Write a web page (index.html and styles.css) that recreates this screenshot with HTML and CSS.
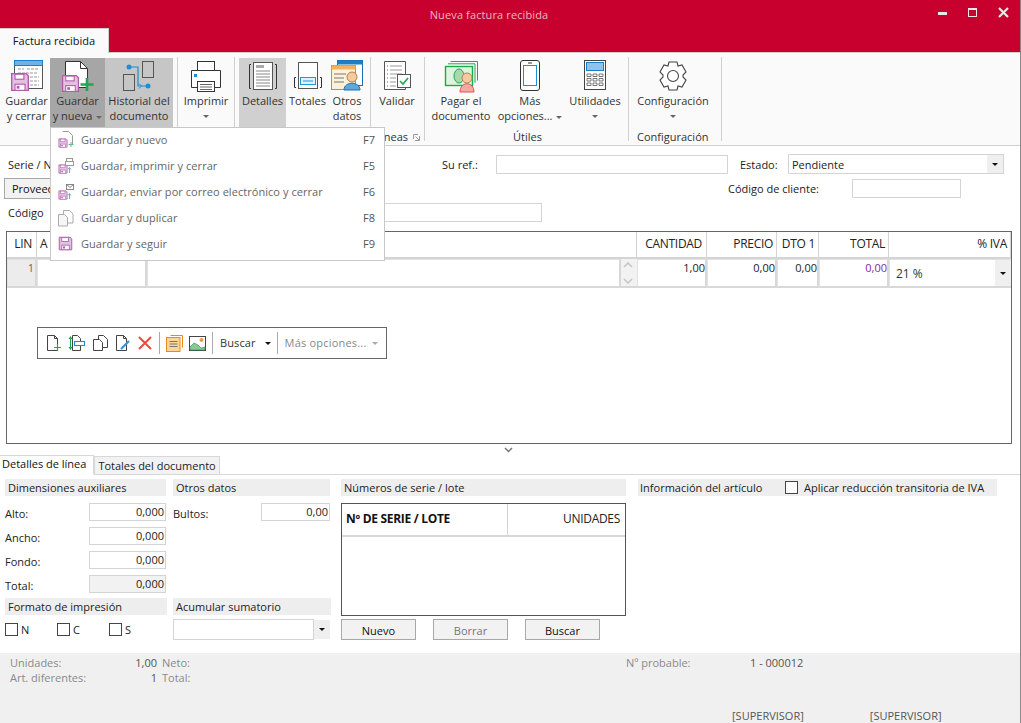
FILE: index.html
```html
<!DOCTYPE html>
<html lang="es">
<head>
<meta charset="utf-8">
<title>Nueva factura recibida</title>
<link rel="stylesheet" href="styles.css">
</head>
<body>
<svg class="defs" width="0" height="0">
  <defs>
    <symbol id="floppy" viewBox="0 0 18 18">
      <path d="M1.500 1.500h13l2 2v13h-15z" fill="#e3bfe0" stroke="#b05cab" stroke-width="1.200"/>
      <rect x="4.500" y="2" width="8" height="4.500" fill="#fff" stroke="#b05cab"/>
      <rect x="4.500" y="11" width="9" height="5.500" fill="#fff" stroke="#b05cab"/>
      <rect x="6" y="12.500" width="2.500" height="2.500" fill="#b05cab"/>
    </symbol>
  </defs>
</svg>
<div class="window">
  <header class="titlebar">
    <div class="title">Nueva factura recibida</div>
    <div class="winbtns">
      <span class="wb-min"></span>
      <span class="wb-max"></span>
      <svg class="wb-close" width="11" height="11" viewBox="0 0 11 11"><path d="M1 1l9 9M10 1l-9 9" stroke="#e8e8e8" stroke-width="2.200"/></svg>
    </div>
  </header>
  <div class="tabstrip"><div class="ribbontab">Factura recibida</div></div>

  <nav class="ribbon">
    <div class="rbtn w-gc">
      <svg width="34" height="36" viewBox="0 0 34 36"><rect x="4.500" y="1.500" width="28" height="28" fill="#fff" stroke="#555"/><rect x="4.500" y="1.500" width="28" height="5" fill="#6db3e8" stroke="#1c7fc7"/><path d="M8 10h6M17 10h12M8 14h20M20 18h9M20 22h9M20 26h9" stroke="#999" stroke-dasharray="3 1"/><use href="#floppy" x="0" y="13" width="20" height="20"/></svg>
      <span>Guardar<br>y cerrar</span>
    </div>
    <div class="rbtn w-gn is-dark">
      <svg width="34" height="36" viewBox="0 0 34 36"><path d="M4.500 2.500h15l7 7v19h-22z" fill="#fff" stroke="#333"/><path d="M19.500 2.500v7h7" fill="none" stroke="#333"/><use href="#floppy" x="0" y="15" width="19" height="19"/><path d="M26 19v13M19.500 25.500h13" stroke="#1ea84f" stroke-width="2.600"/></svg>
      <span>Guardar<br>y nueva <i class="caret"></i></span>
    </div>
    <div class="rbtn w-hd is-mid">
      <svg width="34" height="36" viewBox="0 0 34 36"><rect x="20.500" y="2.500" width="11" height="16" fill="none" stroke="#555"/><rect x="1.500" y="15.500" width="11" height="16" fill="none" stroke="#555"/><path d="M7 8h9v19h10" fill="none" stroke="#1a8fd8" stroke-width="1.200"/><path d="M17 24.500l2.500 2.500-2.500 2.500" fill="none" stroke="#1a8fd8"/><circle cx="7" cy="8" r="2.500" fill="#1a8fd8"/><circle cx="26" cy="27" r="2.500" fill="#1a8fd8"/></svg>
      <span>Historial del<br>documento</span>
    </div>
    <i class="rsep s1"></i>
    <div class="rbtn w-im">
      <svg width="34" height="36" viewBox="0 0 34 36"><rect x="8.500" y="2.500" width="17" height="11" fill="#fff" stroke="#333"/><path d="M2.500 11.500h29v17h-29z" fill="#fff" stroke="#333"/><rect x="5" y="15" width="3" height="3" fill="#1a8fd8"/><rect x="8.500" y="22.500" width="17" height="10" fill="#fff" stroke="#333"/><path d="M11 25.500h12M11 28h12M11 30.500h12" stroke="#666"/></svg>
      <span>Imprimir</span><i class="caret solo"></i>
    </div>
    <i class="rsep s2"></i>
    <div class="rbtn w-de is-light">
      <svg width="34" height="36" viewBox="0 0 34 36"><path d="M5 5.500H3.500v24H5M29 5.500h1.500v24H29" fill="none" stroke="#333"/><rect x="7.500" y="3.500" width="19" height="27" fill="#fff" stroke="#555"/><rect x="10" y="6" width="8" height="3" fill="#aaa"/><path d="M10 12h14M10 15h14M10 18h14M10 21h14M10 24h14M10 27h14" stroke="#888"/></svg>
      <span>Detalles</span>
    </div>
    <div class="rbtn w-to">
      <svg width="30" height="36" viewBox="0 0 30 36"><rect x="5.500" y="3.500" width="19" height="26" fill="#fff" stroke="#555"/><rect x="7.500" y="18.500" width="15" height="7" fill="#dff1fb" stroke="#1a9ad6"/><path d="M3 18.500H1.500v10H3M27 18.500h1.500v10H27" fill="none" stroke="#333"/><path d="M10 22h10" stroke="#1a9ad6"/></svg>
      <span>Totales</span>
    </div>
    <div class="rbtn w-ot">
      <svg width="32" height="36" viewBox="0 0 32 36"><rect x="6.500" y="1.500" width="25" height="25" fill="#fff" stroke="#1a6fb5"/><rect x="6.500" y="1.500" width="25" height="4" fill="#1a7fc7"/><rect x="0.500" y="6.500" width="24" height="24" fill="#fdf2d9" stroke="#c98a3a"/><rect x="0.500" y="6.500" width="24" height="4" fill="#f7b15c"/><path d="M3 15h12M3 19h10M3 23h10" stroke="#777"/><circle cx="21" cy="18" r="5" fill="#f6c9a0" stroke="#b57f4e"/><path d="M13 31c0-9 16-9 16 0z" fill="#5fa8dc" stroke="#1a6fb5"/></svg>
      <span>Otros<br>datos</span>
    </div>
    <i class="rsep s3"></i>
    <div class="rbtn w-va">
      <svg width="30" height="36" viewBox="0 0 30 36"><path d="M2.500 2.500h21v28h-21z" fill="#fff" stroke="#555"/><path d="M8 7h12M8 11h12M8 15h12M8 19h6M8 23h6M8 27h6" stroke="#999"/><path d="M5 7h1M5 11h1M5 15h1M5 19h1M5 23h1M5 27h1" stroke="#d33"/><rect x="15.500" y="15.500" width="13" height="13" fill="#fff" stroke="#555"/><path d="M18 22l3 3 5-6" fill="none" stroke="#1ea84f" stroke-width="1.600"/></svg>
      <span>Validar</span>
    </div>
    <i class="rsep s4"></i>
    <div class="rbtn w-pa">
      <svg width="34" height="36" viewBox="0 0 34 36"><path d="M6.500 2.500h27v19M4 4.800h27v19" fill="none" stroke="#1ea84f"/><rect x="1.500" y="7.500" width="27" height="19" fill="#dff3e1" stroke="#1ea84f" stroke-width="1.400"/><ellipse cx="15" cy="17" rx="5" ry="7" fill="#a8d8ac" stroke="#1ea84f"/><circle cx="23" cy="19" r="5" fill="#f6c9a0" stroke="#c07e50"/><path d="M16 33c0-11 14-11 14 0z" fill="#f4a9a4" stroke="#e0524b"/></svg>
      <span>Pagar el<br>documento</span>
    </div>
    <div class="rbtn w-ma">
      <svg width="22" height="36" viewBox="0 0 22 36"><rect x="1.500" y="1.500" width="19" height="30" rx="2.500" fill="#fff" stroke="#333"/><rect x="4.500" y="6.500" width="13" height="20" fill="#fff" stroke="#1a8fd8"/><path d="M9 4h4" stroke="#333"/></svg>
      <span>Más<br>opciones... <i class="caret"></i></span>
    </div>
    <div class="rbtn w-ut">
      <svg width="24" height="36" viewBox="0 0 24 36"><rect x="1.500" y="1.500" width="21" height="29" fill="#fff" stroke="#444"/><rect x="3.500" y="3.500" width="17" height="8" fill="#8cc4ee" stroke="#1a7fc7"/><path d="M4 15h4v2.500H4zM10 15h4v2.500h-4zM16 15h4v2.500h-4zM4 19.500h4V22H4zM10 19.500h4V22h-4zM16 19.500h4V22h-4zM4 24h4v2.500H4zM10 24h4v2.500h-4zM16 24h4v2.500h-4z" fill="none" stroke="#555" stroke-width=".800"/></svg>
      <span>Utilidades</span><i class="caret solo"></i>
    </div>
    <i class="rsep s5"></i>
    <div class="rbtn w-co">
      <svg width="30" height="36" viewBox="0 0 30 36"><path d="M11 3h8l1 4 4-1 4 7-3 3v2l3 3-4 7-4-1-1 4h-8l-1-4-4 1-4-7 3-3v-2l-3-3 4-7 4 1z" fill="#fff" stroke="#444" stroke-width="1.100"/><circle cx="15" cy="17" r="5.500" fill="#fff" stroke="#444" stroke-width="1.100"/></svg>
      <span>Configuración</span><i class="caret solo"></i>
    </div>
    <i class="rsep s6"></i>
    <div class="rgroups">
      <span class="g-lineas">Líneas<svg class="launch" width="7" height="7" viewBox="0 0 7 7"><path d="M.5 5V.5H5M6.500 2v4.500H2M2.500 2.500L6 6" fill="none" stroke="#999"/></svg></span>
      <span class="g-utiles">Útiles</span>
      <span class="g-config">Configuración</span>
    </div>
  </nav>

  <section class="form">
    <div class="frow r1">
      <label class="serie">Serie / Nº</label>
      <label class="suref">Su ref.:</label>
      <div class="inp i-ref"></div>
      <label class="estado">Estado:</label>
      <div class="combo c-estado"><span>Pendiente</span><b class="drop"><i class="caret dark"></i></b></div>
    </div>
    <div class="frow r2">
      <div class="provbtn">Proveedor</div>
      <label class="ccli">Código de cliente:</label>
      <div class="inp i-cli"></div>
    </div>
    <div class="frow r3">
      <label class="cod">Código</label>
      <div class="inp i-cod"></div>
    </div>
  </section>

  <section class="grid">
    <div class="gh lin">LIN</div>
    <div class="gh art">A</div>
    <div class="gh desc"></div>
    <div class="gh num c-can">CANTIDAD</div>
    <div class="gh num">PRECIO</div>
    <div class="gh num">DTO 1</div>
    <div class="gh num">TOTAL</div>
    <div class="gh num">% IVA</div>
    <div class="gc gc-lin">1</div>
    <div class="gc"></div>
    <div class="gc"></div>
    <div class="gc gc-sc"><svg width="10" height="26" viewBox="0 0 10 26"><path d="M1 7l4-4 4 4M1 19l4 4 4-4" fill="none" stroke="#c4c4c4" stroke-width="1.500"/></svg></div>
    <div class="gc gc-n">1,00</div>
    <div class="gc gc-n">0,00</div>
    <div class="gc gc-n">0,00</div>
    <div class="gc gc-n purple">0,00</div>
    <div class="gc gc-iva"><span>21 %</span><b class="drop"><i class="caret dark"></i></b></div>
  </section>

  <div class="floatbar">
    <svg width="16" height="18" viewBox="0 0 16 18"><path d="M1.500 1.500h7l3 3v12h-10z" fill="#fff" stroke="#444"/><path d="M8.500 1.500v3h3" fill="none" stroke="#444"/><path d="M11.500 10v7M8 13.500h7" stroke="#1ea84f" stroke-width="1.200"/></svg>
    <svg width="18" height="18" viewBox="0 0 18 18"><path d="M4.500 1.500h5l3 3v12h-8z" fill="#fff" stroke="#444"/><rect x="6.500" y="7.500" width="10" height="4" fill="#fff" stroke="#1a8fd8" stroke-width="1.100"/><path d="M2.500 3v10" stroke="#1ea84f"/><path d="M.5 5l2-3 2 3zM.5 13l2 3 2-3z" fill="#1ea84f"/></svg>
    <svg width="17" height="18" viewBox="0 0 17 18"><path d="M6.500 1.500h5l4 4v8h-9z" fill="#fff" stroke="#444"/><path d="M1.500 5.500h6l3 3v8h-9z" fill="#fff" stroke="#444"/></svg>
    <svg width="16" height="18" viewBox="0 0 16 18"><path d="M1.500 1.500h7l3 3v12h-10z" fill="#fff" stroke="#444"/><path d="M8.500 1.500v3h3" fill="none" stroke="#444"/><path d="M6 15l8-8" stroke="#3a8fd8" stroke-width="2.200"/></svg>
    <svg width="16" height="16" viewBox="0 0 16 16"><path d="M2 2l12 12M14 2L2 14" stroke="#ea4b3e" stroke-width="2"/></svg>
    <i class="fsep"></i>
    <svg width="17" height="17" viewBox="0 0 17 17"><path d="M4.500.5h12v12" fill="none" stroke="#e78a1d"/><rect x=".5" y="2.500" width="13.500" height="14" fill="#fbd795" stroke="#e78a1d"/><path d="M3.500 6.500h8M3.500 9h8M3.500 11.500h8" stroke="#777"/></svg>
    <svg width="17" height="15" viewBox="0 0 17 15"><rect x=".5" y=".5" width="16" height="14" fill="#fff" stroke="#444"/><path d="M1 11l4-4 4 2 3 3 4-1v3H1z" fill="#8cc79a" stroke="#2f9a5a" stroke-width=".700"/><circle cx="12.500" cy="4" r="2" fill="#ef9a4a"/></svg>
    <i class="fsep"></i>
    <span class="fb-txt">Buscar</span><i class="caret dark fb-c"></i>
    <i class="fsep"></i>
    <span class="fb-txt off">Más opciones...</span><i class="caret fb-c2"></i>
  </div>

  <div class="splitter"><svg width="9" height="6" viewBox="0 0 9 6"><path d="M1 1l3.500 3.500L8 1" fill="none" stroke="#777" stroke-width="1.500"/></svg></div>

  <div class="tabs">
    <div class="tab on">Detalles de línea</div>
    <div class="tab">Totales del documento</div>
  </div>

  <section class="details">
    <div class="col col1">
      <h3 class="sec">Dimensiones auxiliares</h3>
      <div class="field"><label>Alto:</label><div class="inp n">0,000</div></div>
      <div class="field"><label>Ancho:</label><div class="inp n">0,000</div></div>
      <div class="field"><label>Fondo:</label><div class="inp n">0,000</div></div>
      <div class="field"><label>Total:</label><div class="inp n ro">0,000</div></div>
      <h3 class="sec s-fmt">Formato de impresión</h3>
      <div class="checks">
        <span class="chk"><i class="box"></i>N</span>
        <span class="chk"><i class="box"></i>C</span>
        <span class="chk"><i class="box"></i>S</span>
      </div>
    </div>
    <div class="col col2">
      <h3 class="sec">Otros datos</h3>
      <div class="field"><label>Bultos:</label><div class="inp n">0,00</div></div>
      <div class="spacer"></div>
      <h3 class="sec s-fmt">Acumular sumatorio</h3>
      <div class="combo c-acum"><span></span><b class="drop"><i class="caret dark"></i></b></div>
    </div>
    <div class="col col3">
      <h3 class="sec">Números de serie / lote</h3>
      <div class="lote">
        <div class="lote-h"><b>Nº DE SERIE / LOTE</b><span>UNIDADES</span></div>
      </div>
      <div class="btns">
        <div class="btn">Nuevo</div>
        <div class="btn off">Borrar</div>
        <div class="btn">Buscar</div>
      </div>
    </div>
    <div class="col col4">
      <h3 class="sec sec4"><span>Información del artículo</span><span class="chk iva"><i class="box"></i>Aplicar reducción transitoria de IVA</span></h3>
    </div>
  </section>

  <footer class="status">
    <div class="st-a">
      <div class="st-col"><span>Unidades:</span><span>Art. diferentes:</span></div>
      <div class="st-val"><span>1,00</span><span>1</span></div>
      <div class="st-col st-neto"><span>Neto:</span><span>Total:</span></div>
      <div class="st-prob"><span>Nº probable:</span><span class="st-num">1 - 000012</span></div>
    </div>
    <div class="st-b"><span>[SUPERVISOR]</span><span>[SUPERVISOR]</span></div>
  </footer>

  <div class="menu">
    <div class="mi">
      <svg width="18" height="18" viewBox="0 0 18 18"><path d="M5.500 .5h6l4 4v9" fill="#fff" stroke="#999"/><use href="#floppy" x="1" y="7" width="10" height="10"/><path d="M14 11v5M11.500 13.500h5" stroke="#5fc184"/></svg>
      <span>Guardar y nuevo</span><em>F7</em>
    </div>
    <div class="mi">
      <svg width="18" height="18" viewBox="0 0 18 18"><rect x="9.500" y="1.500" width="6" height="3" fill="#fff" stroke="#999"/><rect x="8.500" y="4.500" width="8" height="4" fill="#fff" stroke="#999"/><use href="#floppy" x="1" y="7" width="10" height="10"/><path d="M12.500 16v-5M11 12.500l1.500-2 1.500 2" fill="none" stroke="#6aa9d8"/></svg>
      <span>Guardar, imprimir y cerrar</span><em>F5</em>
    </div>
    <div class="mi">
      <svg width="18" height="18" viewBox="0 0 18 18"><rect x="9.500" y="1.500" width="7" height="5" fill="#fff" stroke="#888"/><path d="M9.500 1.500l3.500 3 3.500-3" fill="none" stroke="#888"/><use href="#floppy" x="1" y="7" width="10" height="10"/><path d="M12.500 16v-5M11 12.500l1.500-2 1.500 2" fill="none" stroke="#6aa9d8"/></svg>
      <span>Guardar, enviar por correo electrónico y cerrar</span><em>F6</em>
    </div>
    <div class="mi">
      <svg width="18" height="18" viewBox="0 0 18 18"><path d="M6.500 1.500h6l3.500 3.500v9H6.500z" fill="#fff" stroke="#aaa"/><path d="M1.500 5.500h6l3 3v8.500h-9z" fill="#f6f6f6" stroke="#aaa"/></svg>
      <span>Guardar y duplicar</span><em>F8</em>
    </div>
    <div class="mi">
      <svg width="18" height="18" viewBox="0 0 18 18"><use href="#floppy" x="1" y="1" width="15" height="15"/></svg>
      <span>Guardar y seguir</span><em>F9</em>
    </div>
  </div>
</div>
</body>
</html>
```

FILE: styles.css
```css
* { box-sizing: border-box; }
html, body { margin: 0; padding: 0; background: #fff; }
body { font-family: "Open Sans", "Noto Sans", sans-serif; font-size: 11px; color: #222; overflow: hidden; }
.defs { position: absolute; }
label { display: block; }
h3 { margin: 0; font-weight: 400; font-size: 11px; }
i, em { font-style: normal; }

.window { position: relative; width: 1021px; height: 723px; overflow: hidden; border-right: 1px solid #8a8a8a; }

.titlebar { height: 28px; background: #c8002d; display: flex; align-items: center; justify-content: center; position: relative; }
.title { color: #e6b9c3; font-size: 11px; letter-spacing: .12px; margin-left: -42px; }
.winbtns { position: absolute; right: 0; top: 0; display: flex; align-items: center; height: 24px; padding-right: 11px; gap: 21px; }
.wb-min { width: 9px; height: 3px; background: #e8e8e8; margin-top: 3px; }
.wb-max { width: 9px; height: 9px; border: 1px solid #e8e8e8; border-top-width: 2px; }

.tabstrip { height: 25px; background: #c8002d; border-bottom: 1px solid #cfcfcf; }
.ribbontab { width: 109px; height: 25px; background: #fafafa; border: 1px solid #cfcfcf; border-width: 1px 1px 0 0; text-align: center; line-height: 23px; color: #111; font-size: 11px; }

.ribbon { position: relative; height: 93px; background: #fafafa; border-bottom: 1px solid #cfcfcf; display: flex; align-items: flex-start; padding-left: 3px; padding-top: 5px; }
.rbtn { height: 69px; display: flex; flex-direction: column; align-items: center; text-align: center; color: #333; line-height: 15px; flex: none; padding-top: 1px; }
.rbtn svg { flex: none; height: 36px; margin-bottom: -2px; }
.rbtn > span { display: block; white-space: nowrap; }
.is-dark { background: #a6a6a6; }
.is-mid { background: #c6c6c6; }
.is-light { background: #d0d0d0; }
.w-gc { width: 47px; }
.w-gn { width: 55px; }
.w-hd { width: 68px; }
.w-im { width: 56px; }
.w-de { width: 47px; margin-left: 4px; }
.w-to { width: 43px; }
.w-ot { width: 36px; }
.w-va { width: 50px; margin-left: 1px; }
.w-pa { width: 60px; margin-left: 6px; }
.w-ma { width: 68px; margin-left: 5px; }
.w-ut { width: 56px; margin-left: 3px; }
.w-co { width: 80px; margin-left: 4px; }
.rsep { flex: none; width: 1px; height: 84px; margin-top: -1px; background: #d0d0d0; }
.s1 { margin-left: 4px; }
.s3 { margin-left: 5px; }
.s4 { margin-left: 2px; }
.s5 { margin-left: 5px; }
.s6 { margin-left: 8px; }
.caret { display: inline-block; width: 0; height: 0; border: 3px solid transparent; border-top: 3px solid #666; border-bottom: 0; vertical-align: middle; margin-left: 1px; }
.caret.solo { margin: 7px 0 0; }
.caret.dark { border-top-color: #111; }
.rgroups { position: absolute; left: 0; top: 77px; width: 100%; height: 13px; line-height: 13px; color: #333; }
.rgroups span { position: absolute; top: 0; }
.g-lineas { left: 340px; width: 83px; text-align: right; padding-right: 15px; }
.launch { position: absolute; right: 3px; top: 4px; }
.g-utiles { left: 513px; }
.g-config { left: 637px; }

.form { padding-top: 8px; height: 85px; }
.frow { display: flex; align-items: center; position: relative; }
.r1 { height: 20px; }
.r2 { height: 20px; margin-top: 4px; }
.r3 { height: 19px; margin-top: 5px; }
.inp { height: 100%; border: 1px solid #d4d4d4; background: #fff; }
.serie { margin-left: 8px; width: 434px; }
.suref { width: 54px; }
.i-ref { width: 232px; height: 19px; }
.estado { margin-left: 12px; width: 48px; }
.combo { display: flex; align-items: center; border: 1px solid #d4d4d4; height: 20px; background: #fff; }
.combo span { flex: 1; padding-left: 3px; color: #222; }
.drop { width: 16px; height: 100%; background: #efefef; display: flex; align-items: center; justify-content: center; flex: none; }
.drop .caret { margin: 0; }
.c-estado { width: 216px; }
.provbtn { margin-left: 4px; width: 100px; height: 21px; background: #f2f2f2; border: 1px solid #a8a8a8; padding-left: 7px; line-height: 19px; color: #111; }
.ccli { margin-left: 624px; width: 124px; }
.i-cli { width: 109px; height: 19px; }
.cod { margin-left: 8px; width: 320px; }
.i-cod { width: 214px; height: 19px; }

.grid { margin-left: 6px; width: 1006px; height: 213px; border: 1px solid #666; display: grid; grid-template-columns: 30px 110px 474px 16px 70px 70px 42px 70px 122px; grid-template-rows: 27px 29px; align-content: start; }
.gh { border-right: 1px solid #d4d4d4; border-bottom: 2px solid #d4d4d4; padding: 0 3px; line-height: 24px; color: #222; font-size: 12px; letter-spacing: -.3px; }
.gh:last-child { border-right: 0; }
.lin { text-align: right; padding-right: 4px; }
.desc { grid-column: span 2; }
.num { text-align: right; }
.c-can { padding-right: 4px; }
.gc { border: 1px solid #e2e2e2; border-bottom: 2px solid #d8d8d8; border-right: 2px solid #d8d8d8; background: #fff; }
.gc-lin { background: #ececec; color: #666; text-align: right; padding: 0 1px 0 0; line-height: 16px; }
.gc-sc { background: #f2f2f2; padding: 1px 0 0 2px; border: 0; border-bottom: 2px solid #d8d8d8; }
.gc-sc svg { display: block; }
.gc-n { text-align: right; padding: 0; line-height: 16px; }
.purple { color: #8a1fa0; }
.gc-iva { display: flex; align-items: center; justify-content: space-between; border-right: 0; padding-left: 6px; color: #333; font-size: 12px; }

.floatbar { position: absolute; left: 37px; top: 327px; width: 350px; height: 32px; background: #fff; border: 1px solid #666; display: flex; align-items: center; padding-left: 8px; }
.floatbar svg { flex: none; margin-right: 6px; }
.fsep { width: 1px; height: 22px; background: #aaa; margin: 0 6px 0 0; flex: none; }
.fb-txt { color: #333; padding-bottom: 2px; letter-spacing: .1px; margin-left: 1px; }
.fb-txt.off { color: #888; letter-spacing: .2px; }
.fb-c { margin: 0 6px 0 9px; }
.fb-c2 { margin-left: 5px; border-top-color: #aaa; }

.splitter { height: 11px; display: flex; justify-content: center; align-items: center; padding-right: 3px; }

.tabs { height: 20px; display: flex; align-items: flex-end; border-bottom: 1px solid #d8d8d8; position: relative; }
.tab { height: 18px; border: 1px solid #d8d8d8; border-bottom: 0; background: #f2f2f2; padding: 0 3px 0 3px; line-height: 18px; }
.tab.on { height: 20px; background: #fff; border-left: 0; border-bottom: 1px solid #fff; margin-bottom: -1px; padding: 0 7px 0 2px; line-height: 16px; color: #111; }

.details { display: flex; padding-top: 4px; height: 178px; }
.col { flex: none; }
.col1 { width: 161px; margin-left: 5px; }
.col2 { width: 157px; margin-left: 7px; }
.col3 { width: 285px; margin-left: 11px; }
.col4 { width: 359px; margin-left: 12px; }
.sec { height: 17px; background: #eee; line-height: 17px; padding-left: 3px; color: #222; }
.field { display: flex; align-items: center; justify-content: space-between; height: 18px; margin-bottom: 6px; }
.field label { padding-top: 2px; }
.sec + .field { margin-top: 7px; }
.field .inp { width: 77px; height: 18px; text-align: right; padding-right: 1px; line-height: 16px; }
.col2 .field .inp { width: 69px; }
.ro { background: #f2f2f2; }
.s-fmt { margin-right: -1px; }
.col1 .s-fmt { margin-top: -1px; }
.checks { display: flex; margin-top: 7px; }
.chk { display: inline-flex; align-items: center; color: #222; }
.checks .chk { width: 52px; }
.box { width: 13px; height: 13px; border: 1px solid #444; margin-right: 3px; flex: none; background: #fff; }
.spacer { height: 71px; }
.c-acum { width: 141px; height: 21px; margin-top: 4px; position: relative; }
.c-acum .drop { position: absolute; left: 140px; top: 0; height: 19px; }
.lote { height: 113px; margin-top: 7px; border: 1px solid #555; }
.lote-h { height: 33px; border-bottom: 2px solid #d8d8d8; display: grid; grid-template-columns: 165px 1fr; align-items: stretch; line-height: 30px; }
.lote-h b { padding-left: 4px; color: #111; font-weight: 700; font-size: 12px; letter-spacing: -.3px; white-space: nowrap; }
.lote-h span { border-left: 1px solid #d4d4d4; text-align: right; padding-right: 5px; font-size: 12px; letter-spacing: -.3px; }
.btns { display: flex; gap: 17px; margin-top: 3px; }
.btn { width: 75px; height: 21px; background: #f2f2f2; border: 1px solid #a8a8a8; text-align: center; line-height: 21px; color: #111; }
.btn.off { color: #777; }
.sec4 { display: flex; padding-left: 2px; }
.sec4 > span:first-child { width: 145px; }
.iva .box { margin-right: 6px; }

.status { height: 70px; background: #f0f0f0; color: #8a8a8a; position: relative; padding-top: 2px; }
.st-a { display: flex; line-height: 15px; }
.st-col, .st-val { display: flex; flex-direction: column; }
.st-col { margin-left: 10px; width: 100px; }
.st-val { width: 47px; text-align: right; color: #555; }
.st-neto { margin-left: 5px; width: 464px; }
.st-prob { display: flex; }
.st-prob span:first-child { width: 124px; }
.st-num { color: #555; }
.st-b { position: absolute; left: 732px; top: 55px; display: flex; gap: 66px; color: #555; line-height: 15px; }

.menu { position: absolute; left: 50px; top: 127px; width: 335px; height: 134px; background: #fff; border: 1px solid #c8c8c8; display: flex; flex-direction: column; }
.mi { height: 26px; display: flex; align-items: center; padding: 0 0 3px 6px; color: #666; flex: none; }
.mi svg { flex: none; margin-right: 6px; }
.mi span { flex: 1; letter-spacing: .05px; }
.mi em { width: 21px; color: #555; }
```
